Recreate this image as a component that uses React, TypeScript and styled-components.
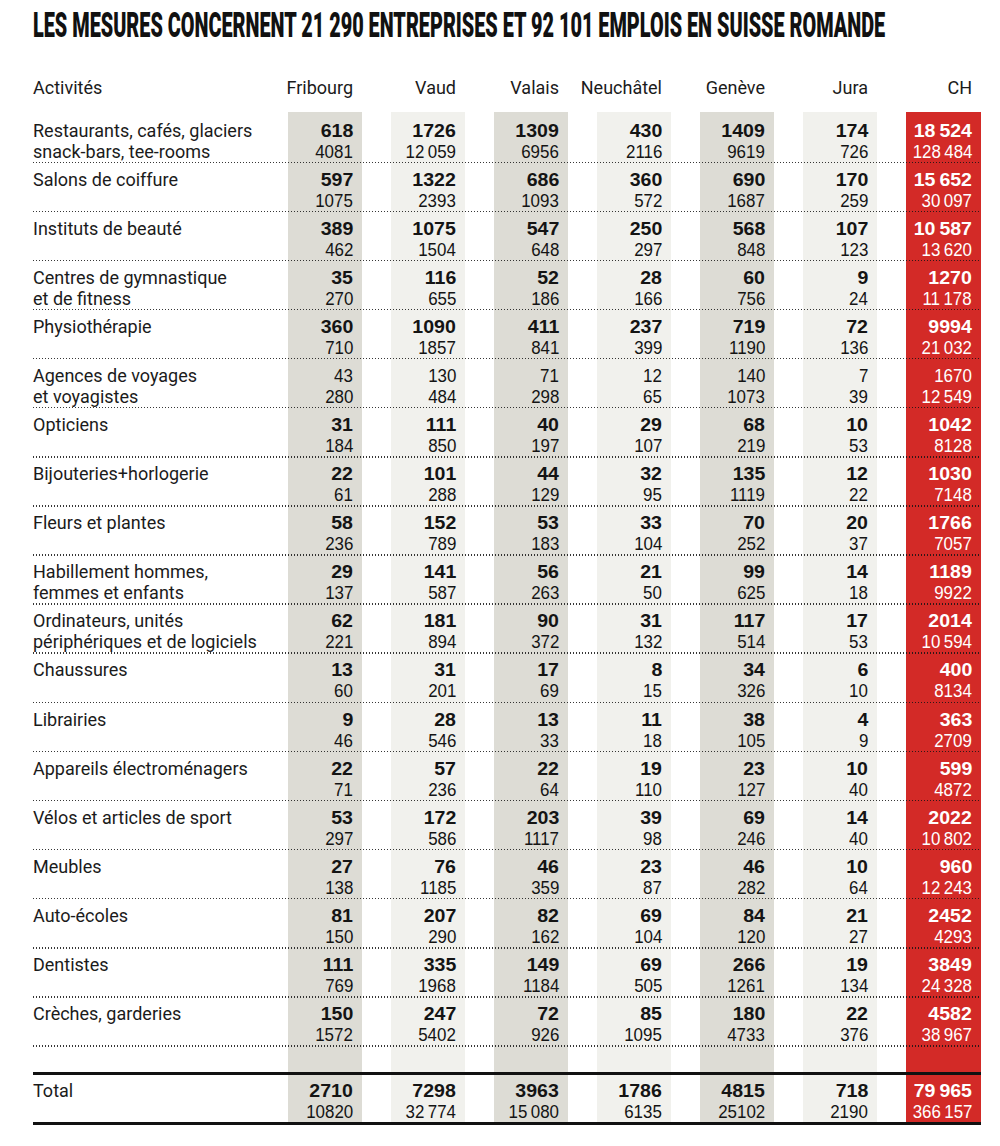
import React, { useLayoutEffect, useRef, useState } from 'react';
import styled, { createGlobalStyle, css } from 'styled-components';

type Tone = 'dark' | 'light' | 'red';

const TONES: Tone[] = ['dark', 'light', 'dark', 'light', 'dark', 'light', 'red'];
const CANTONS = ['Fribourg', 'Vaud', 'Valais', 'Neuchâtel', 'Genève', 'Jura', 'CH'];

interface Activity {
  label: string[];
  values: [string, string][];
  bold?: boolean;
}

const T = '\u2009';

const DATA: Activity[] = [
  { label: ['Restaurants, cafés, glaciers', 'snack-bars, tee-rooms'], values: [['618', '4081'], ['1726', `12${T}059`], ['1309', '6956'], ['430', '2116'], ['1409', '9619'], ['174', '726'], [`18${T}524`, `128${T}484`]] },
  { label: ['Salons de coiffure'], values: [['597', '1075'], ['1322', '2393'], ['686', '1093'], ['360', '572'], ['690', '1687'], ['170', '259'], [`15${T}652`, `30${T}097`]] },
  { label: ['Instituts de beauté'], values: [['389', '462'], ['1075', '1504'], ['547', '648'], ['250', '297'], ['568', '848'], ['107', '123'], [`10${T}587`, `13${T}620`]] },
  { label: ['Centres de gymnastique', 'et de fitness'], values: [['35', '270'], ['116', '655'], ['52', '186'], ['28', '166'], ['60', '756'], ['9', '24'], ['1270', `11${T}178`]] },
  { label: ['Physiothérapie'], values: [['360', '710'], ['1090', '1857'], ['411', '841'], ['237', '399'], ['719', '1190'], ['72', '136'], ['9994', `21${T}032`]] },
  { label: ['Agences de voyages', 'et voyagistes'], bold: false, values: [['43', '280'], ['130', '484'], ['71', '298'], ['12', '65'], ['140', '1073'], ['7', '39'], ['1670', `12${T}549`]] },
  { label: ['Opticiens'], values: [['31', '184'], ['111', '850'], ['40', '197'], ['29', '107'], ['68', '219'], ['10', '53'], ['1042', '8128']] },
  { label: ['Bijouteries+horlogerie'], values: [['22', '61'], ['101', '288'], ['44', '129'], ['32', '95'], ['135', '1119'], ['12', '22'], ['1030', '7148']] },
  { label: ['Fleurs et plantes'], values: [['58', '236'], ['152', '789'], ['53', '183'], ['33', '104'], ['70', '252'], ['20', '37'], ['1766', '7057']] },
  { label: ['Habillement hommes,', 'femmes et enfants'], values: [['29', '137'], ['141', '587'], ['56', '263'], ['21', '50'], ['99', '625'], ['14', '18'], ['1189', '9922']] },
  { label: ['Ordinateurs, unités', 'périphériques et de logiciels'], values: [['62', '221'], ['181', '894'], ['90', '372'], ['31', '132'], ['117', '514'], ['17', '53'], ['2014', `10${T}594`]] },
  { label: ['Chaussures'], values: [['13', '60'], ['31', '201'], ['17', '69'], ['8', '15'], ['34', '326'], ['6', '10'], ['400', '8134']] },
  { label: ['Librairies'], values: [['9', '46'], ['28', '546'], ['13', '33'], ['11', '18'], ['38', '105'], ['4', '9'], ['363', '2709']] },
  { label: ['Appareils électroménagers'], values: [['22', '71'], ['57', '236'], ['22', '64'], ['19', '110'], ['23', '127'], ['10', '40'], ['599', '4872']] },
  { label: ['Vélos et articles de sport'], values: [['53', '297'], ['172', '586'], ['203', '1117'], ['39', '98'], ['69', '246'], ['14', '40'], ['2022', `10${T}802`]] },
  { label: ['Meubles'], values: [['27', '138'], ['76', '1185'], ['46', '359'], ['23', '87'], ['46', '282'], ['10', '64'], ['960', `12${T}243`]] },
  { label: ['Auto-écoles'], values: [['81', '150'], ['207', '290'], ['82', '162'], ['69', '104'], ['84', '120'], ['21', '27'], ['2452', '4293']] },
  { label: ['Dentistes'], values: [['111', '769'], ['335', '1968'], ['149', '1184'], ['69', '505'], ['266', '1261'], ['19', '134'], ['3849', `24${T}328`]] },
  { label: ['Crèches, garderies'], values: [['150', '1572'], ['247', '5402'], ['72', '926'], ['85', '1095'], ['180', '4733'], ['22', '376'], ['4582', `38${T}967`]] },
];

const TOTAL: [string, string][] = [
  ['2710', '10820'], ['7298', `32${T}774`], ['3963', `15${T}080`], ['1786', '6135'], ['4815', '25102'], ['718', '2190'], [`79${T}965`, `366${T}157`],
];

const GlobalStyle = createGlobalStyle`
  html, body { margin: 0; padding: 0; background: #ffffff; }
  body {
    font-family: Roboto, "Liberation Sans", Arial, sans-serif;
    color: #1b1b1b;
    -webkit-font-smoothing: antialiased;
  }
`;

const Page = styled.main`
  width: 1000px;
  min-height: 1146px;
  box-sizing: border-box;
  padding: 6px 0 0 33px;
  overflow: hidden;
`;

const Title = styled.h1`
  margin: 0;
  width: 900px;
  overflow: hidden;
  font-family: Roboto, "Liberation Sans", Arial, sans-serif;
  font-weight: 900;
  font-size: 35px;
  line-height: 40px;
  white-space: nowrap;
  color: #111111;
`;

const TitleText = styled.span`
  display: inline-block;
  transform-origin: left center;
`;

const gridColumns = css`
  display: grid;
  grid-template-columns: 226px repeat(6, 74px) 75px;
  column-gap: 29px;
  width: 948px;
`;

const Table = styled.section`
  display: flex;
  flex-direction: column;
  margin-top: 31px;
`;

const HeaderRow = styled.div`
  ${gridColumns};
  height: 35px;
  font-size: 18px;
  line-height: 21px;
`;

const HeadCell = styled.div<{ $first?: boolean }>`
  display: flex;
  justify-content: ${(p) => (p.$first ? 'flex-start' : 'flex-end')};
  align-items: flex-start;
  padding-right: ${(p) => (p.$first ? '0' : '9px')};
  white-space: nowrap;
`;

const DataRow = styled.div<{ $first?: boolean }>`
  ${gridColumns};
  position: relative;
  box-sizing: border-box;
  height: ${(p) => (p.$first ? '51px' : '49.1px')};
  --pad-top: ${(p) => (p.$first ? '8px' : '5.5px')};

  &::after {
    content: '';
    position: absolute;
    left: 0;
    right: 0;
    bottom: 0;
    height: 1.5px;
    background-image: linear-gradient(to right, rgba(20, 20, 20, 0.85) 0 1.4px, transparent 1.4px 3px);
    background-size: 3px 1.5px;
    background-repeat: repeat-x;
  }
`;

const BlankRow = styled.div`
  ${gridColumns};
  height: 25px;
`;

const TotalRow = styled.div`
  ${gridColumns};
  box-sizing: border-box;
  height: 53px;
  border-top: 3px solid #111111;
  border-bottom: 3px solid #111111;
  --pad-top: 5px;
`;

const LabelCell = styled.div`
  padding-top: var(--pad-top, 0);
  font-size: 18px;
  line-height: 21px;
  white-space: nowrap;
`;

const LabelLine = styled.span`
  display: block;
`;

const toneBg: Record<Tone, string> = {
  dark: '#dddcd5',
  light: '#f1f1ed',
  red: '#d32a27',
};

const NumCell = styled.div<{ $tone: Tone }>`
  display: flex;
  flex-direction: column;
  align-items: flex-end;
  padding-top: var(--pad-top, 0);
  padding-right: 9px;
  background: ${(p) => toneBg[p.$tone]};
  color: ${(p) => (p.$tone === 'red' ? '#ffffff' : '#141414')};
`;

const Num = styled.span<{ $bold?: boolean }>`
  display: block;
  height: 21px;
  font-family: "Liberation Sans", Arial, sans-serif;
  font-size: 18.8px;
  line-height: 21px;
  font-weight: ${(p) => (p.$bold ? 700 : 400)};
  white-space: nowrap;
  transform: scaleX(${(p) => (p.$bold ? 1.04 : 0.9)});
  transform-origin: right center;
`;

function FittedTitle({ text, width }: { text: string; width: number }) {
  const ref = useRef<HTMLSpanElement>(null);
  const [scale, setScale] = useState(1);
  useLayoutEffect(() => {
    const measure = () => {
      const w = ref.current?.offsetWidth;
      if (w) setScale(width / w);
    };
    measure();
    if (document.fonts && document.fonts.ready) document.fonts.ready.then(measure);
  }, [width, text]);
  return (
    <Title>
      <TitleText ref={ref} style={{ transform: `scaleX(${scale})` }}>
        {text}
      </TitleText>
    </Title>
  );
}

function ValueCells({ values, bold }: { values: [string, string][]; bold: boolean }) {
  return (
    <>
      {values.map(([a, b], i) => (
        <NumCell key={i} $tone={TONES[i]}>
          <Num $bold={bold}>{a}</Num>
          <Num>{b}</Num>
        </NumCell>
      ))}
    </>
  );
}

export default function App() {
  return (
    <>
      <GlobalStyle />
      <Page>
        <FittedTitle
          width={852}
          text="LES MESURES CONCERNENT 21 290 ENTREPRISES ET 92 101 EMPLOIS EN SUISSE ROMANDE"
        />
        <Table>
          <HeaderRow>
            <HeadCell $first>Activités</HeadCell>
            {CANTONS.map((c) => (
              <HeadCell key={c}>{c}</HeadCell>
            ))}
          </HeaderRow>
          {DATA.map((row, r) => (
            <DataRow key={r} $first={r === 0}>
              <LabelCell>
                {row.label.map((l) => (
                  <LabelLine key={l}>{l}</LabelLine>
                ))}
              </LabelCell>
              <ValueCells values={row.values} bold={row.bold !== false} />
            </DataRow>
          ))}
          <BlankRow>
            <div />
            {TONES.map((t, i) => (
              <NumCell key={i} $tone={t} />
            ))}
          </BlankRow>
          <TotalRow>
            <LabelCell>
              <LabelLine>Total</LabelLine>
            </LabelCell>
            <ValueCells values={TOTAL} bold />
          </TotalRow>
        </Table>
      </Page>
    </>
  );
}
